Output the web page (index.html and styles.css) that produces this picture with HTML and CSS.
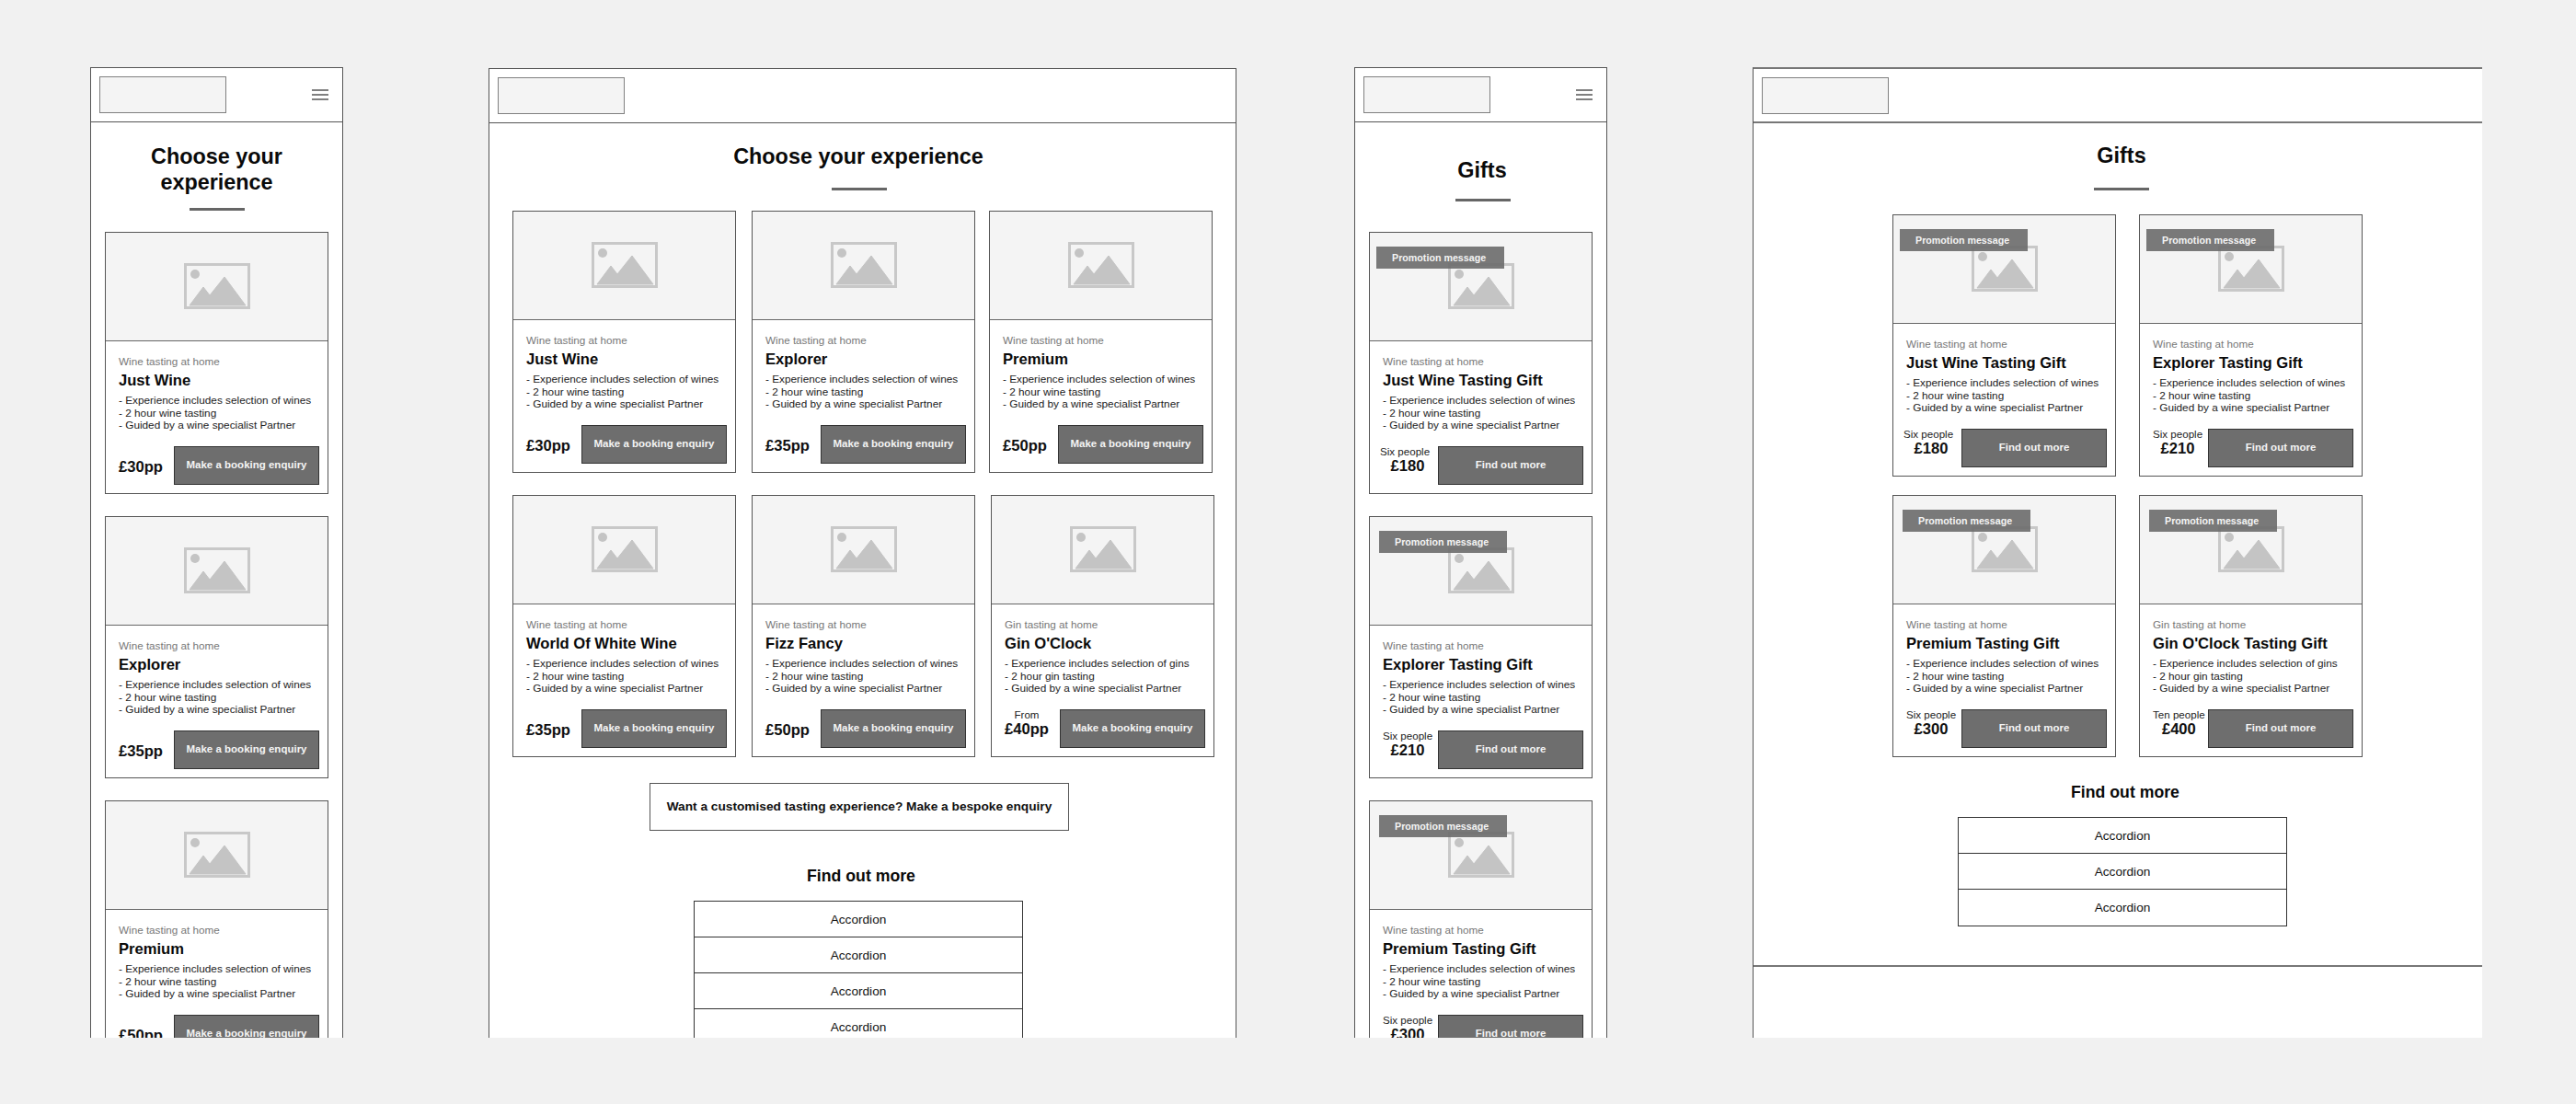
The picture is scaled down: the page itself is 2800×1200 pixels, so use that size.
FILE: index.html
```html
<!DOCTYPE html>
<html lang="en">
  <head>
    <meta charset="UTF-8" />
    <title>Wine tasting wireframes</title>
    <link rel="stylesheet" href="styles.css">
  </head>
  <body>

    <!-- Shared icons -->
    <svg class="defs" width="0" height="0">
      <symbol id="placeholder" viewBox="0 0 72 50">
        <rect x="1.5" y="1.5" width="69" height="47" fill="none" stroke="#c8c8c8" stroke-width="3" />
        <circle cx="12" cy="12" r="5" fill="#c4c4c4" />
        <path d="M6 46 L21 26 L28 35 L44 15 L67 46 Z" fill="#c4c4c4" stroke="#c4c4c4" stroke-linejoin="round" />
      </symbol>
      <symbol id="burger" viewBox="0 0 18 12">
        <path d="M0 1 H18 M0 6 H18 M0 11 H18" stroke="#555" stroke-width="1.5" fill="none" />
      </symbol>
    </svg>

    <div class="board">

      <!-- Experiences, mobile -->
      <div class="frame frame-mobile">
        <div class="header">
          <div class="logo"></div>
          <svg class="burger"><use href="#burger" /></svg>
        </div>
        <div class="main">
          <h1 class="title title-two-line">Choose your<br>experience</h1>
          <div class="rule rule-two-line"></div>
          <div class="stack">
            <div class="card">
              <div class="card-image"><svg class="picture"><use href="#placeholder" /></svg></div>
              <div class="card-body">
                <div class="tag">Wine tasting at home</div>
                <h3 class="name">Just Wine</h3>
                <div class="points">- Experience includes selection of wines<br>- 2 hour wine tasting<br>- Guided by a wine specialist Partner</div>
                <div class="card-foot">
                  <div class="price">£30pp</div>
                  <div class="btn">Make a booking enquiry</div>
                </div>
              </div>
            </div>
            <div class="card">
              <div class="card-image"><svg class="picture"><use href="#placeholder" /></svg></div>
              <div class="card-body">
                <div class="tag">Wine tasting at home</div>
                <h3 class="name">Explorer</h3>
                <div class="points">- Experience includes selection of wines<br>- 2 hour wine tasting<br>- Guided by a wine specialist Partner</div>
                <div class="card-foot">
                  <div class="price">£35pp</div>
                  <div class="btn">Make a booking enquiry</div>
                </div>
              </div>
            </div>
            <div class="card">
              <div class="card-image"><svg class="picture"><use href="#placeholder" /></svg></div>
              <div class="card-body">
                <div class="tag">Wine tasting at home</div>
                <h3 class="name">Premium</h3>
                <div class="points">- Experience includes selection of wines<br>- 2 hour wine tasting<br>- Guided by a wine specialist Partner</div>
                <div class="card-foot">
                  <div class="price">£50pp</div>
                  <div class="btn">Make a booking enquiry</div>
                </div>
              </div>
            </div>
          </div>
        </div>
      </div>

      <!-- Experiences, desktop -->
      <div class="frame frame-desktop">
        <div class="header">
          <div class="logo"></div>
        </div>
        <div class="main">
          <h1 class="title title-desktop">Choose your experience</h1>
          <div class="rule rule-desktop"></div>
          <div class="grid-three">
            <div class="card">
              <div class="card-image"><svg class="picture"><use href="#placeholder" /></svg></div>
              <div class="card-body">
                <div class="tag">Wine tasting at home</div>
                <h3 class="name">Just Wine</h3>
                <div class="points">- Experience includes selection of wines<br>- 2 hour wine tasting<br>- Guided by a wine specialist Partner</div>
                <div class="card-foot">
                  <div class="price">£30pp</div>
                  <div class="btn">Make a booking enquiry</div>
                </div>
              </div>
            </div>
            <div class="card">
              <div class="card-image"><svg class="picture"><use href="#placeholder" /></svg></div>
              <div class="card-body">
                <div class="tag">Wine tasting at home</div>
                <h3 class="name">Explorer</h3>
                <div class="points">- Experience includes selection of wines<br>- 2 hour wine tasting<br>- Guided by a wine specialist Partner</div>
                <div class="card-foot">
                  <div class="price">£35pp</div>
                  <div class="btn">Make a booking enquiry</div>
                </div>
              </div>
            </div>
            <div class="card card-left">
              <div class="card-image"><svg class="picture"><use href="#placeholder" /></svg></div>
              <div class="card-body">
                <div class="tag">Wine tasting at home</div>
                <h3 class="name">Premium</h3>
                <div class="points">- Experience includes selection of wines<br>- 2 hour wine tasting<br>- Guided by a wine specialist Partner</div>
                <div class="card-foot">
                  <div class="price">£50pp</div>
                  <div class="btn">Make a booking enquiry</div>
                </div>
              </div>
            </div>
            <div class="card">
              <div class="card-image"><svg class="picture"><use href="#placeholder" /></svg></div>
              <div class="card-body">
                <div class="tag">Wine tasting at home</div>
                <h3 class="name">World Of White Wine</h3>
                <div class="points">- Experience includes selection of wines<br>- 2 hour wine tasting<br>- Guided by a wine specialist Partner</div>
                <div class="card-foot">
                  <div class="price">£35pp</div>
                  <div class="btn">Make a booking enquiry</div>
                </div>
              </div>
            </div>
            <div class="card">
              <div class="card-image"><svg class="picture"><use href="#placeholder" /></svg></div>
              <div class="card-body">
                <div class="tag">Wine tasting at home</div>
                <h3 class="name">Fizz Fancy</h3>
                <div class="points">- Experience includes selection of wines<br>- 2 hour wine tasting<br>- Guided by a wine specialist Partner</div>
                <div class="card-foot">
                  <div class="price">£50pp</div>
                  <div class="btn">Make a booking enquiry</div>
                </div>
              </div>
            </div>
            <div class="card">
              <div class="card-image"><svg class="picture"><use href="#placeholder" /></svg></div>
              <div class="card-body">
                <div class="tag">Gin tasting at home</div>
                <h3 class="name">Gin O'Clock</h3>
                <div class="points">- Experience includes selection of gins<br>- 2 hour gin tasting<br>- Guided by a wine specialist Partner</div>
                <div class="card-foot">
                  <div class="price-stack">
                    <div class="price-note">From</div>
                    <div class="price-amount">£40pp</div>
                  </div>
                  <div class="btn">Make a booking enquiry</div>
                </div>
              </div>
            </div>
          </div>
          <div class="bespoke">Want a customised tasting experience? Make a bespoke enquiry</div>
          <h2 class="more more-desktop">Find out more</h2>
          <div class="accordion accordion-desktop">
            <div class="accordion-row">Accordion</div>
            <div class="accordion-row">Accordion</div>
            <div class="accordion-row">Accordion</div>
            <div class="accordion-row">Accordion</div>
          </div>
        </div>
      </div>

      <!-- Gifts, mobile -->
      <div class="frame frame-gifts-mobile">
        <div class="header">
          <div class="logo"></div>
          <svg class="burger"><use href="#burger" /></svg>
        </div>
        <div class="main">
          <h1 class="title title-gifts-mobile">Gifts</h1>
          <div class="rule rule-gifts-mobile"></div>
          <div class="stack">
            <div class="card">
              <div class="card-image">
                <svg class="picture"><use href="#placeholder" /></svg>
                <div class="promo">Promotion message</div>
              </div>
              <div class="card-body">
                <div class="tag">Wine tasting at home</div>
                <h3 class="name">Just Wine Tasting Gift</h3>
                <div class="points">- Experience includes selection of wines<br>- 2 hour wine tasting<br>- Guided by a wine specialist Partner</div>
                <div class="card-foot">
                  <div class="price-stack price-stack-out">
                    <div class="price-note">Six people</div>
                    <div class="price-amount">£180</div>
                  </div>
                  <div class="btn">Find out more</div>
                </div>
              </div>
            </div>
            <div class="card">
              <div class="card-image">
                <svg class="picture"><use href="#placeholder" /></svg>
                <div class="promo promo-in">Promotion message</div>
              </div>
              <div class="card-body">
                <div class="tag">Wine tasting at home</div>
                <h3 class="name">Explorer Tasting Gift</h3>
                <div class="points">- Experience includes selection of wines<br>- 2 hour wine tasting<br>- Guided by a wine specialist Partner</div>
                <div class="card-foot">
                  <div class="price-stack">
                    <div class="price-note">Six people</div>
                    <div class="price-amount">£210</div>
                  </div>
                  <div class="btn">Find out more</div>
                </div>
              </div>
            </div>
            <div class="card">
              <div class="card-image">
                <svg class="picture"><use href="#placeholder" /></svg>
                <div class="promo promo-in">Promotion message</div>
              </div>
              <div class="card-body">
                <div class="tag">Wine tasting at home</div>
                <h3 class="name">Premium Tasting Gift</h3>
                <div class="points">- Experience includes selection of wines<br>- 2 hour wine tasting<br>- Guided by a wine specialist Partner</div>
                <div class="card-foot">
                  <div class="price-stack">
                    <div class="price-note">Six people</div>
                    <div class="price-amount">£300</div>
                  </div>
                  <div class="btn">Find out more</div>
                </div>
              </div>
            </div>
          </div>
        </div>
      </div>

      <!-- Gifts, desktop -->
      <div class="frame frame-gifts-desktop">
        <div class="header">
          <div class="logo"></div>
        </div>
        <div class="main">
          <h1 class="title title-gifts-desktop">Gifts</h1>
          <div class="rule rule-gifts-desktop"></div>
          <div class="grid-two">
            <div class="card">
              <div class="card-image">
                <svg class="picture"><use href="#placeholder" /></svg>
                <div class="promo">Promotion message</div>
              </div>
              <div class="card-body">
                <div class="tag">Wine tasting at home</div>
                <h3 class="name">Just Wine Tasting Gift</h3>
                <div class="points">- Experience includes selection of wines<br>- 2 hour wine tasting<br>- Guided by a wine specialist Partner</div>
                <div class="card-foot">
                  <div class="price-stack price-stack-out">
                    <div class="price-note">Six people</div>
                    <div class="price-amount">£180</div>
                  </div>
                  <div class="btn">Find out more</div>
                </div>
              </div>
            </div>
            <div class="card">
              <div class="card-image">
                <svg class="picture"><use href="#placeholder" /></svg>
                <div class="promo">Promotion message</div>
              </div>
              <div class="card-body">
                <div class="tag">Wine tasting at home</div>
                <h3 class="name">Explorer Tasting Gift</h3>
                <div class="points">- Experience includes selection of wines<br>- 2 hour wine tasting<br>- Guided by a wine specialist Partner</div>
                <div class="card-foot">
                  <div class="price-stack">
                    <div class="price-note">Six people</div>
                    <div class="price-amount">£210</div>
                  </div>
                  <div class="btn">Find out more</div>
                </div>
              </div>
            </div>
            <div class="card">
              <div class="card-image">
                <svg class="picture"><use href="#placeholder" /></svg>
                <div class="promo promo-in">Promotion message</div>
              </div>
              <div class="card-body">
                <div class="tag">Wine tasting at home</div>
                <h3 class="name">Premium Tasting Gift</h3>
                <div class="points">- Experience includes selection of wines<br>- 2 hour wine tasting<br>- Guided by a wine specialist Partner</div>
                <div class="card-foot">
                  <div class="price-stack">
                    <div class="price-note">Six people</div>
                    <div class="price-amount">£300</div>
                  </div>
                  <div class="btn">Find out more</div>
                </div>
              </div>
            </div>
            <div class="card">
              <div class="card-image">
                <svg class="picture"><use href="#placeholder" /></svg>
                <div class="promo promo-in">Promotion message</div>
              </div>
              <div class="card-body">
                <div class="tag">Gin tasting at home</div>
                <h3 class="name">Gin O'Clock Tasting Gift</h3>
                <div class="points">- Experience includes selection of gins<br>- 2 hour gin tasting<br>- Guided by a wine specialist Partner</div>
                <div class="card-foot">
                  <div class="price-stack">
                    <div class="price-note">Ten people</div>
                    <div class="price-amount">£400</div>
                  </div>
                  <div class="btn">Find out more</div>
                </div>
              </div>
            </div>
          </div>
          <h2 class="more more-gifts">Find out more</h2>
          <div class="accordion accordion-gifts">
            <div class="accordion-row">Accordion</div>
            <div class="accordion-row">Accordion</div>
            <div class="accordion-row">Accordion</div>
          </div>
        </div>
        <div class="footer"></div>
      </div>

    </div>
  </body>
</html>
```

FILE: styles.css
```css
* {
  box-sizing: border-box;
}

html,
body {
  height: 100%;
}

body {
  margin: 0;
  font-family: "Liberation Sans", Arial, sans-serif;
  background-color: #f1f1f1;
  color: #111;
  overflow: hidden;
}

.defs {
  display: block;
  height: 0;
}

.board {
  display: flex;
  height: 1128px;
  padding: 73px 0 0 98px;
  overflow: hidden;
}

/* Frames */
.frame {
  display: flex;
  flex-direction: column;
  flex: none;
  background: white;
  border: 1px solid #555;
  border-bottom: none;
  overflow: hidden;
}

.frame-mobile {
  width: 275px;
}

.frame-desktop {
  width: 813px;
  margin-left: 158px;
  margin-top: 1px;
}

.frame-gifts-mobile {
  width: 275px;
  margin-left: 128px;
}

.frame-gifts-desktop {
  width: 793px;
  margin-left: 158px;
  border-right: none;
  border-top: 2px solid #777;
}

.header {
  display: flex;
  flex: none;
  justify-content: space-between;
  align-items: center;
  height: 59px;
  padding: 0 15px 0 9px;
  border-bottom: 1px solid #555;
}

.frame-gifts-desktop .header {
  border-bottom: 2px solid #777;
}

.logo {
  width: 138px;
  height: 40px;
  background-color: #f4f4f4;
  border: 1px solid #808080;
}

.burger {
  width: 18px;
  height: 12px;
}

.main {
  flex: 1;
}

/* Headings */
.title {
  margin: 0;
  font-size: 23.4px;
  line-height: 28px;
  font-weight: bold;
  text-align: center;
  color: #0a0a0a;
}

.rule {
  width: 60px;
  height: 3px;
  margin-left: auto;
  margin-right: auto;
  background-color: #666;
}

.title-two-line {
  padding-top: 23px;
}

.rule-two-line {
  margin-top: 14px;
  margin-bottom: 23px;
}

.title-desktop {
  padding: 22px 9px 0 0;
}

.rule-desktop {
  position: relative;
  left: -4px;
  margin-top: 20px;
  margin-bottom: 22px;
}

.title-gifts-mobile {
  padding: 38px 0 0 3px;
}

.rule-gifts-mobile {
  position: relative;
  left: 2px;
  margin-top: 17px;
  margin-bottom: 33px;
}

.title-gifts-desktop {
  padding: 21px 0 0 8px;
}

.rule-gifts-desktop {
  position: relative;
  left: 4px;
  margin-top: 21px;
  margin-bottom: 26px;
}

/* Card lists */
.stack {
  display: flex;
  flex-direction: column;
  gap: 24px;
  margin-left: 15px;
}

.grid-three {
  display: grid;
  grid-template-columns: repeat(3, 243px);
  column-gap: 17px;
  row-gap: 24px;
  margin-left: 25px;
}

.grid-two {
  display: grid;
  grid-template-columns: repeat(2, 243px);
  column-gap: 25px;
  row-gap: 20px;
  margin-left: 151px;
}

/* Card */
.card {
  display: flex;
  flex-direction: column;
  width: 243px;
  height: 285px;
  border: 1px solid #555;
}

.card-left {
  margin-left: -2px;
}

.card-image {
  position: relative;
  display: flex;
  flex: none;
  justify-content: center;
  align-items: center;
  height: 118px;
  padding-bottom: 1px;
  background-color: #f4f4f4;
  border-bottom: 1px solid #666;
}

.picture {
  width: 72px;
  height: 50px;
}

.promo {
  position: absolute;
  top: 15px;
  left: 7px;
  width: 139px;
  height: 24px;
  padding-left: 17px;
  background: rgba(108, 108, 108, 0.9);
  color: #f4f4f4;
  font-size: 10.7px;
  font-weight: bold;
  line-height: 24px;
}

.promo-in {
  left: 10px;
}

.card-body {
  display: flex;
  flex: 1;
  flex-direction: column;
  padding: 14px 9px 9px 14px;
}

.tag {
  font-size: 11.7px;
  line-height: 15px;
  color: #777;
}

.name {
  margin: 4px 0 5px;
  font-size: 16.6px;
  line-height: 20px;
  font-weight: bold;
  color: #0a0a0a;
  white-space: nowrap;
}

.points {
  font-size: 11.8px;
  line-height: 13.7px;
  color: #222;
  white-space: nowrap;
}

.card-foot {
  display: flex;
  justify-content: space-between;
  align-items: center;
  margin-top: auto;
}

.price {
  padding-top: 3px;
  font-size: 16.6px;
  line-height: 18px;
  font-weight: bold;
}

.price-stack {
  align-self: flex-start;
  margin-top: -1px;
  text-align: center;
  white-space: nowrap;
}

.price-stack-out {
  margin-left: -3px;
}

.price-stack-out .price-amount {
  padding-left: 6px;
}

.price-note {
  font-size: 11.6px;
  line-height: 14px;
  color: #222;
}

.price-amount {
  font-size: 16.6px;
  line-height: 18px;
  font-weight: bold;
}

.btn {
  flex: none;
  width: 158px;
  height: 42px;
  background-color: #6e6e6e;
  border: 1px solid #333;
  color: #f4f4f4;
  font-size: 11.5px;
  font-weight: bold;
  line-height: 38px;
  text-align: center;
}

/* Below the cards */
.bespoke {
  width: 456px;
  height: 52px;
  margin: 28px 0 0 174px;
  border: 1px solid #555;
  font-size: 13.7px;
  font-weight: bold;
  line-height: 50px;
  text-align: center;
  white-space: nowrap;
}

.more {
  margin: 0;
  font-size: 17.7px;
  line-height: 22px;
  font-weight: bold;
  text-align: center;
  color: #0a0a0a;
}

.more-desktop {
  margin-top: 38px;
  padding-right: 3px;
}

.more-gifts {
  margin-top: 27px;
  padding-left: 16px;
}

.accordion {
  width: 358px;
  margin-top: 16px;
  border: 1px solid #333;
  border-bottom: none;
}

.accordion-desktop {
  margin-left: 222px;
}

.accordion-gifts {
  margin-left: 222px;
  border-bottom: 1px solid #333;
}

.accordion-row {
  height: 39px;
  border-bottom: 1px solid #333;
  font-size: 13.65px;
  line-height: 39px;
  text-align: center;
}

.accordion-row:last-child {
  border-bottom: none;
}

.accordion-desktop .accordion-row:last-child {
  border-bottom: 1px solid #333;
}

.footer {
  flex: none;
  height: 79px;
  border-top: 2px solid #777;
}
```
